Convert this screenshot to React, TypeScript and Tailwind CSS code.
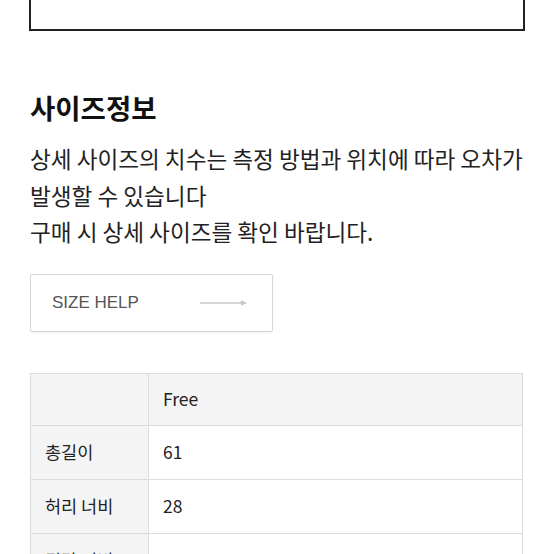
import React from "react";

const kr = { fontFamily: '"Noto Sans CJK KR", "Noto Sans", sans-serif' };

export default function App() {
  const rows = [
    { label: "총길이", value: "61" },
    { label: "허리 너비", value: "28" },
    { label: "밑단 너비", value: "20" },
  ];
  return (
    <div className="w-[554px] h-[554px] overflow-hidden bg-white" style={kr}>
      <div className="ml-[29px] w-[496px] h-[31px] border-2 border-t-0 border-[#222]" />
      <div className="px-[30px]">
        <h2 className="mt-[58px] text-[27.5px] leading-[36px] font-bold text-[#111]">사이즈정보</h2>
        <p className="mt-[16px] text-[22.6px] leading-[36.5px] text-[#222] whitespace-nowrap">
          상세 사이즈의 치수는 측정 방법과 위치에 따라 오차가
          <br />
          발생할 수 있습니다
          <br />
          구매 시 상세 사이즈를 확인 바랍니다.
        </p>
        <div className="mt-[23px] w-[243px] h-[58px] border border-[#d8d8d8] rounded-[2px] shadow-[0_1px_2px_rgba(0,0,0,0.06)] flex items-center pl-[21px]">
          <span
            className="text-[17px] text-[#555] tracking-[0px]"
            style={{ fontFamily: '"Liberation Sans", Arial, sans-serif' }}
          >
            SIZE HELP
          </span>
          <svg className="ml-[61px]" width="48" height="8" viewBox="0 0 48 8">
            <line x1="0" y1="4" x2="42" y2="4" stroke="#c8c8c8" strokeWidth="1.3" />
            <path d="M41 1.2 L47 4 L41 6.8 Z" fill="#c8c8c8" />
          </svg>
        </div>
        <table className="mt-[41px] w-[493px] border-collapse text-[17.5px] text-[#222]">
          <tbody>
            <tr className="h-[52px] bg-[#f4f4f4]">
              <td className="w-[118px] border border-[#dcdcdc]"></td>
              <td className="border border-[#dcdcdc] pl-[14px]">Free</td>
            </tr>
            {rows.map((r) => (
              <tr key={r.label} className="h-[54px]">
                <td className="w-[118px] border border-[#dcdcdc] bg-[#f4f4f4] pl-[14px]">{r.label}</td>
                <td className="border border-[#dcdcdc] bg-white pl-[14px]">{r.value}</td>
              </tr>
            ))}
          </tbody>
        </table>
      </div>
    </div>
  );
}
